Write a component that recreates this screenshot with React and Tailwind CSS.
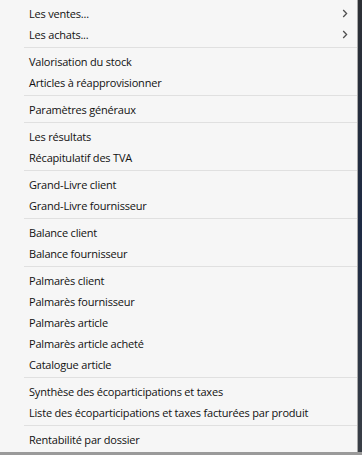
import React from "react";

const groups = [
  [
    { t: "Les ventes...", sub: true },
    { t: "Les achats...", sub: true },
  ],
  [{ t: "Valorisation du stock" }, { t: "Articles à réapprovisionner" }],
  [{ t: "Paramètres généraux" }],
  [{ t: "Les résultats" }, { t: "Récapitulatif des TVA" }],
  [{ t: "Grand-Livre client" }, { t: "Grand-Livre fournisseur" }],
  [{ t: "Balance client" }, { t: "Balance fournisseur" }],
  [
    { t: "Palmarès client" },
    { t: "Palmarès fournisseur" },
    { t: "Palmarès article" },
    { t: "Palmarès article acheté" },
    { t: "Catalogue article" },
  ],
  [
    { t: "Synthèse des écoparticipations et taxes" },
    { t: "Liste des écoparticipations et taxes facturées par produit" },
  ],
  [{ t: "Rentabilité par dossier" }],
];

function Chevron() {
  return (
    <svg width="6" height="9" viewBox="0 0 6 9" className="shrink-0">
      <path d="M1.2 1 L4.6 4.5 L1.2 8" fill="none" stroke="#505050" strokeWidth="1.3" />
    </svg>
  );
}

export default function App() {
  return (
    <div className="w-[362px] h-[455px] bg-[#9a9a9a] flex flex-col overflow-hidden">
      <div className="flex h-[452px]">
        <div
          className="w-[358px] h-full bg-[#f6f6f6] border-r border-[#a8a8a8] pt-[2.5px] text-[11px] tracking-[-0.2px] text-[#111111]"
          style={{ fontFamily: '"Open Sans", Lato, sans-serif' }}
        >
          {groups.map((g, gi) => (
            <div key={gi}>
              {gi > 0 && (
                <div className="h-[6px] flex items-center pl-[24px]">
                  <div className="h-px w-full bg-[#e0e0e0]" />
                </div>
              )}
              {g.map((it, ii) => (
                <div key={ii} className="h-[21px] flex items-center pl-[29px] pr-[9px]">
                  <span className="flex-1 whitespace-nowrap leading-none">{it.t}</span>
                  {it.sub && <Chevron />}
                </div>
              ))}
            </div>
          ))}
        </div>
        <div className="flex-1 bg-gradient-to-b from-[#2d3035] via-[#1d2a44] to-[#3a3f46]" />
      </div>
    </div>
  );
}
